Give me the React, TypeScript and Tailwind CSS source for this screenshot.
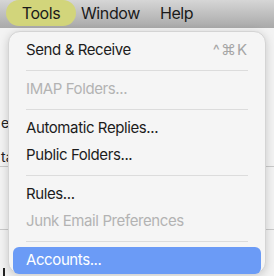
import React from 'react';

type Item =
  | { kind: 'item'; label: string; disabled?: boolean; shortcut?: string; active?: boolean }
  | { kind: 'sep' };

const items: Item[] = [
  { kind: 'item', label: 'Send & Receive', shortcut: '^⌘K' },
  { kind: 'sep' },
  { kind: 'item', label: 'IMAP Folders...', disabled: true },
  { kind: 'sep' },
  { kind: 'item', label: 'Automatic Replies...' },
  { kind: 'item', label: 'Public Folders...' },
  { kind: 'sep' },
  { kind: 'item', label: 'Rules...' },
  { kind: 'item', label: 'Junk Email Preferences', disabled: true },
  { kind: 'sep' },
  { kind: 'item', label: 'Accounts...', active: true },
];

const App = () => {
  return (
    <div
      className="relative w-[274px] h-[276px] overflow-hidden bg-[#f3f3f3]"
      style={{ fontFamily: 'Inter, "Liberation Sans", sans-serif' }}
    >
      {/* menu bar */}
      <div className="h-[28px] flex items-start bg-gradient-to-b from-[#d6d6d6] to-[#a9a9a9] text-[16px] tracking-[-0.4px] text-[#1a1a1a]">
        <div className="ml-[6px] w-[70px] h-[26px] rounded-[13px] bg-[#d2d57b] flex items-center justify-center">
          Tools
        </div>
        <div className="ml-[5px] h-[26px] flex items-center">Window</div>
        <div className="ml-[20px] h-[26px] flex items-center">Help</div>
      </div>

      {/* window content behind the menu */}
      <div className="text-[14px] text-[#222]">
        <div className="h-[84px]" />
        <div className="h-[20px] pl-[1px]">e</div>
        <div className="h-[14px]" />
        <div className="h-[20px] pl-[1px]">ta</div>
        <div className="h-px bg-[#c9c9c9]" />
        <div className="h-[62px]" />
        <div className="h-px bg-[#c9c9c9]" />
        <div className="h-[38px]" />
        <div className="w-[2px] h-[12px] ml-[3px] bg-[#222]" />
      </div>

      {/* dropdown menu */}
      <div className="absolute left-[8px] top-[31px] w-[258px] h-[243px] rounded-[12px] bg-[#f5f5f5] border border-[#d4d4d4] shadow-[0_2px_10px_rgba(0,0,0,0.18)] pt-[5px] px-[4px]">
        {items.map((it, i) =>
          it.kind === 'sep' ? (
            <div key={i} className="h-[12px] flex items-center px-[13px]">
              <div className="h-px w-full bg-[#dcdcdc]" />
            </div>
          ) : (
            <div
              key={i}
              className={`h-[27px] flex items-center justify-between px-[13px] rounded-[6px] text-[15px] tracking-[-0.4px] ${
                it.active ? 'bg-[#6b9bf6] text-white' : it.disabled ? 'text-[#b3b3b3]' : 'text-[#1c1c1c]'
              }`}
            >
              <span>{it.label}</span>
              {it.shortcut && <span className="text-[#a6a6a6] tracking-[1px]">{it.shortcut}</span>}
            </div>
          )
        )}
      </div>
    </div>
  );
};

export default App;
